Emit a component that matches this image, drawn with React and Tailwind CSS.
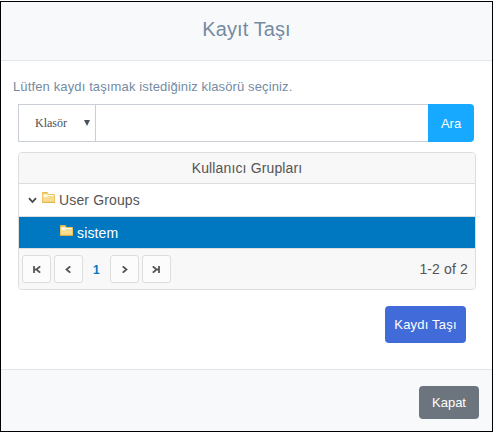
const SANS = "font-['Liberation_Sans',Arial,sans-serif]";

function FolderIcon() {
  return (
    <svg width="13" height="11" viewBox="0 0 13 11" className="shrink-0">
      <path d="M0.5 10V1.2h4.7L6.2 2.5H12.5V10z" fill="#fbeab4" stroke="#edc565" />
      <path d="M0.5 1.5V0.5h4.8l0.8 1" fill="none" stroke="#e7b946" />
      <path d="M2 3.5h9.5M2 4.5h3" stroke="#fffaea" />
      <path d="M1.5 9.5V6h3.7l1-1.2h5.6v4.7z" fill="#f9de91" stroke="#f6d67f" strokeWidth="0.7" />
      <path d="M0 10.4h13" stroke="#e3b04a" />
    </svg>
  );
}

function PagerButton({ children }) {
  return (
    <button className="flex h-7 w-[29px] items-center justify-center rounded-[3px] border border-[#dddddd] bg-[#fcfcfc] pt-px">
      <svg width="9" height="7" viewBox="0 0 9 7" fill="none" stroke="#565656" strokeWidth="1.8">
        {children}
      </svg>
    </button>
  );
}

export default function App() {
  return (
    <div className={"h-[433px] w-[494px] bg-white pt-px " + SANS}>
      <div className="flex h-[431px] w-[493px] flex-col border border-black bg-white">
        <header className="flex h-[59px] shrink-0 items-center justify-center border-b border-[#e2e7ed] bg-[#f8f9fb] pb-1">
          <h1 className="text-[20px] leading-[30px] tracking-[0.1px] text-[#748ba3]">Kayıt Taşı</h1>
        </header>

        <main className="flex h-[308px] shrink-0 flex-col pt-4">
          <p className="pl-3 text-[13px] leading-5 tracking-[0.13px] text-[#748ba3]">
            Lütfen kaydı taşımak istediğiniz klasörü seçiniz.
          </p>

          <div className="mt-[7px] ml-[17px] flex h-[38px] w-[456px]">
            <div className="flex w-[78px] items-center justify-between border border-[#cacfd7] pr-1 pl-4">
              <span className="font-['Liberation_Serif',serif] text-[12px] text-[#495057]">Klasör</span>
              <svg width="8" height="8" viewBox="0 0 8 8" fill="#495057">
                <path d="M1 1h6L4 7z" />
              </svg>
            </div>
            <input aria-label="Ara" className="min-w-0 flex-1 border-y border-[#cacfd7] outline-none" />
            <button className="w-[46px] rounded-r-[4px] bg-[#17a8ff] pt-px text-[13px] text-white">Ara</button>
          </div>

          <section className="mt-[10px] ml-[17px] flex h-[138px] w-[458px] shrink-0 flex-col overflow-hidden rounded-[4px] border border-[#dddddd] text-[14px] tracking-[0.14px] text-[#555555]">
            <div className="flex h-[31px] shrink-0 items-center justify-center border-b border-[#dddddd] bg-[#f8f8f8]">
              Kullanıcı Grupları
            </div>
            <div className="flex h-[33px] shrink-0 items-center border-b border-[#dddddd] pl-[9px]">
              <svg width="9" height="7" viewBox="0 0 9 7" fill="none" stroke="#444444" strokeWidth="1.8">
                <path d="M1 1.2L4.5 5 8 1.2" />
              </svg>
              <span className="mr-1 mb-[5px] ml-[5px] flex"><FolderIcon /></span>
              <span>User Groups</span>
            </div>
            <div className="flex h-8 shrink-0 items-center border-b border-[#dddddd] bg-[#0078c1] pl-[41px] text-white">
              <span className="mr-1 mb-1 flex"><FolderIcon /></span>
              <span className="pt-[2px]">sistem</span>
            </div>
            <div className="flex flex-1 items-center gap-[3px] bg-[#f8f8f8] pr-[7px] pl-[3px]">
              <PagerButton>
                <path d="M2 0v7M8.2 0.3L4.4 3.5l3.8 3.2M2 3.5h2.5" />
              </PagerButton>
              <PagerButton>
                <path d="M6.3 0.3L2.5 3.5l3.8 3.2" />
              </PagerButton>
              <span className="w-[21px] pt-px text-center text-[12px] font-bold text-[#0078c1]">1</span>
              <PagerButton>
                <path d="M2.7 0.3l3.8 3.2-3.8 3.2" />
              </PagerButton>
              <PagerButton>
                <path d="M7 0v7M0.8 0.3l3.8 3.2L0.8 6.7M7 3.5H4.5" />
              </PagerButton>
              <span className="ml-auto">1-2 of 2</span>
            </div>
          </section>

          <button className="mt-4 mr-[26px] h-[37px] w-[81px] self-end rounded-[4px] bg-[#416bd9] text-[13px] tracking-[0.2px] text-white">
            Kaydı Taşı
          </button>
        </main>

        <footer className="flex flex-1 items-start justify-end border-t border-[#e5e5e5] bg-[#f8f9fb] pt-4 pr-[13px]">
          <button className="h-[33px] w-[60px] rounded-[4px] bg-[#6c757d] text-[13px] text-white">Kapat</button>
        </footer>
      </div>
    </div>
  );
}
